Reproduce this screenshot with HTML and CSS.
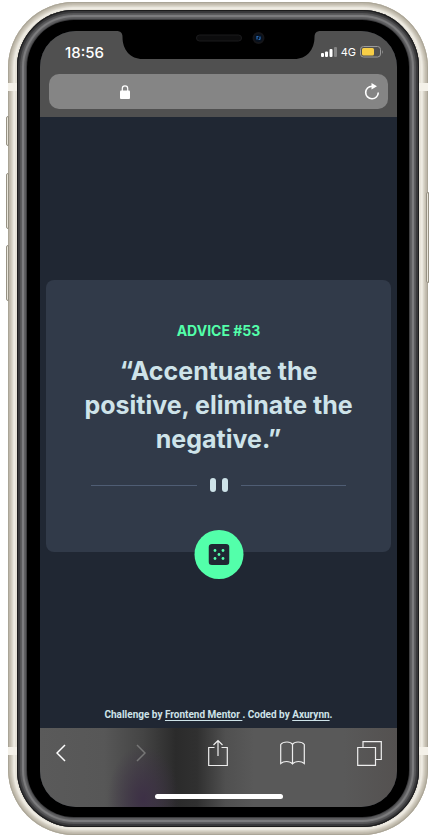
FILE: index.html
```html
<!DOCTYPE html>
<html lang="en">
<head>
<meta charset="utf-8">
<meta name="viewport" content="width=device-width, initial-scale=1">
<title>Advice generator</title>
<link rel="stylesheet" href="styles.css">
</head>
<body>
<div class="phone">
  <span class="side-key side-key-mute"></span>
  <span class="side-key side-key-up"></span>
  <span class="side-key side-key-down"></span>
  <span class="side-key side-key-power"></span>
  <span class="antenna antenna-top"></span>
  <span class="antenna antenna-bottom"></span>
  <div class="rim">
    <div class="glass">
      <div class="screen">
        <svg class="notch" viewBox="0 0 205 30" width="205" height="30" aria-hidden="true">
          <path d="M0 0H204V1C200 1 198 3 198 7C198 20 190 29 178 29H26C14 29 6 20 6 7C6 3 4 1 0 1Z" fill="#000"/>
          <rect x="80" y="5" width="45" height="6" rx="3" fill="#0c0c0d" stroke="#1b1b1d"/>
          <circle cx="142" cy="8" r="6" fill="#151518"/>
          <circle cx="142" cy="8" r="4" fill="#07111f"/>
          <path d="M140.500 6v3.500M143.500 6.500v3M141 6.500h1M142 9.500h1.500" stroke="#2b6cb5" stroke-width="1.200" fill="none"/>
        </svg>
        <header class="browser-top">
          <div class="status">
            <span class="clock">18:56</span>
            <span class="signals">
              <svg width="16" height="10" viewBox="0 0 16 10" aria-hidden="true">
                <g fill="#fff"><rect x="0" y="6" width="3" height="4" rx="1"/><rect x="4" y="4.500" width="3" height="5.500" rx="1"/><rect x="8.500" y="2" width="3" height="8" rx="1"/></g>
                <rect x="13" y="0" width="3" height="10" rx="1" fill="#858585"/>
              </svg>
              <span class="network">4G</span>
              <svg width="24" height="12" viewBox="0 0 24 12" aria-hidden="true">
                <rect x=".5" y=".5" width="20" height="10.500" rx="3" fill="none" stroke="#9b9b9b"/>
                <rect x="2" y="2" width="12" height="7.500" rx="1.500" fill="#f7ce46"/>
                <path d="M22 4v4q1.500-2 0-4" fill="#a5a5a5"/>
              </svg>
            </span>
          </div>
          <div class="address">
            <svg width="10" height="14" viewBox="0 0 10 14" aria-hidden="true">
              <rect x="0" y="5.500" width="10" height="8.500" rx="1" fill="#fff"/>
              <path d="M2.300 6V3.500a2.700 2.700 0 0 1 5.400 0V6" fill="none" stroke="#fff" stroke-width="1.200"/>
            </svg>
            <input class="address-input" type="text" aria-label="Address">
            <button class="icon-button" aria-label="Reload">
              <svg width="16" height="18" viewBox="0 0 16 18" aria-hidden="true">
                <path d="M8.500 3.200H8A6.300 6.300 0 1 0 14.300 9.600" fill="none" stroke="#fff" stroke-width="1.600"/>
                <path d="M7.500 0L13 3.300L7.500 6.500Z" fill="#fff"/>
              </svg>
            </button>
          </div>
        </header>
        <main class="page">
          <article class="card">
            <h1 class="advice-number">ADVICE #53</h1>
            <p class="quote">“Accentuate the positive, eliminate the negative.”</p>
            <div class="divider"><span class="bar"></span><span class="bar"></span></div>
            <button class="dice" aria-label="New advice">
              <svg width="21" height="21" viewBox="0 0 21 21" aria-hidden="true">
                <rect width="21" height="21" rx="3.500" fill="#202733"/>
                <g fill="#53ffaa"><circle cx="6.500" cy="6.500" r="1.400"/><circle cx="14.500" cy="6.500" r="1.400"/><circle cx="10.500" cy="10.500" r="1.400"/><circle cx="6.500" cy="14.500" r="1.400"/><circle cx="14.500" cy="14.500" r="1.400"/></g>
              </svg>
            </button>
          </article>
          <footer class="attribution">Challenge by <a href="#">Frontend Mentor </a>. Coded by <a href="#">Axurynn</a>.</footer>
        </main>
        <nav class="toolbar" aria-label="Browser">
          <div class="tools">
            <button class="icon-button history-button" aria-label="Back"><svg width="10" height="18" viewBox="0 0 10 18"><path d="M9 1L1 9L9 17" fill="none" stroke="#fff" stroke-width="1.500"/></svg></button>
            <button class="icon-button history-button" aria-label="Forward"><svg width="10" height="18" viewBox="0 0 10 18"><path d="M1 1L9 9L1 17" fill="none" stroke="#777" stroke-width="1.500"/></svg></button>
            <button class="icon-button" aria-label="Share"><svg width="20" height="28" viewBox="0 0 20 28"><path d="M6.500 8.500H.7V26.500H19.300V8.500H13.500M10 17V1.500M5.500 6L10 1.500L14.500 6" fill="none" stroke="#eee" stroke-width="1.200"/></svg></button>
            <button class="icon-button" aria-label="Bookmarks"><svg width="25" height="24" viewBox="0 0 25 24"><path d="M12.500 3.500Q11 1 7 1Q2.500 1 .7 3.500V22.500Q3 20.500 6.500 20.500Q10.500 20.500 12.500 23Q14.500 20.500 18.500 20.500Q22 20.500 24.300 22.500V3.500Q22.500 1 18 1Q14 1 12.500 3.500V23" fill="none" stroke="#eee" stroke-width="1.200"/></svg></button>
            <button class="icon-button" aria-label="Tabs"><svg width="25" height="25" viewBox="0 0 25 25"><path d="M.7 6.500H18.500V24.300H.7ZM6 6.500V.7H24.300V18.500H18.500" fill="none" stroke="#eee" stroke-width="1.200"/></svg></button>
          </div>
          <span class="home-bar"></span>
        </nav>
      </div>
    </div>
  </div>
</div>
</body>
</html>
```

FILE: styles.css
```css
* {
  box-sizing: border-box;
}

body {
  margin: 0;
  min-height: 100vh;
  padding: 2px 4px 2px 8px;
  display: flex;
  background: #fff;
  font-family: Inter, "Liberation Sans", sans-serif;
}

button {
  border: 0;
  padding: 0;
  cursor: pointer;
}

svg {
  display: block;
}

/* Device shell */
.phone {
  position: relative;
  flex: 1;
  display: flex;
  padding: 8px 9px;
  border-radius: 66px;
  background: #e6e2d8;
  box-shadow: inset 0 0 1px 1px #a8a395, inset 0 0 2px 3px #bfb9ab, inset 0 0 2px 5px #d6d1c5, inset 0 0 1px 7px #f1eee6;
}

.rim {
  position: relative;
  flex: 1;
  display: flex;
  padding: 10px;
  border-radius: 57px;
  background: #3a3a3c;
  box-shadow: inset 0 0 0 1px #1c1c1d, inset 0 0 1px 3px #38383a, inset 0 0 1px 5px #58585a, inset 0 0 1px 7px #808082, inset 0 0 1px 9px #5e5e60;
}

.glass {
  flex: 1;
  display: flex;
  padding: 11px 12px 10px 13px;
  border-radius: 47px;
  background: #000;
}

.screen {
  position: relative;
  flex: 1;
  display: flex;
  flex-direction: column;
  overflow: hidden;
  border-radius: 36px;
  background: #202733;
}

.side-key {
  position: absolute;
  left: -2px;
  width: 3px;
  border: 1px solid #969183;
  border-radius: 2px 0 0 2px;
  background: #e8e4da;
}

.side-key-mute {
  top: 114px;
  height: 30px;
}

.side-key-up {
  top: 171px;
  height: 56px;
}

.side-key-down {
  top: 243px;
  height: 56px;
}

.side-key-power {
  top: 190px;
  right: -1px;
  left: auto;
  height: 91px;
}

.antenna {
  position: absolute;
  left: 0;
  right: 0;
  height: 8px;
  background: #f4f1e9;
}

.antenna-top {
  top: 81px;
}

.antenna-bottom {
  bottom: 80px;
}

.notch {
  position: absolute;
  top: -1px;
  left: 50%;
  transform: translateX(-50%);
}

/* Browser top */
.browser-top {
  padding: 11px 9px 8px;
  background: #505050;
}

.status {
  height: 20px;
  margin-bottom: 12px;
  padding: 0 4px 0 16px;
  display: flex;
  justify-content: space-between;
  align-items: center;
  color: #fff;
}

.clock {
  font-size: 15px;
  font-weight: 500;
}

.signals {
  display: flex;
  align-items: center;
  gap: 4px;
}

.network {
  font-size: 11px;
}

.address {
  height: 35px;
  padding: 0 8px 0 71px;
  display: flex;
  align-items: center;
  border-radius: 10px;
  background: #858585;
}

.address-input {
  flex: 1;
  min-width: 0;
  border: 0;
  outline: 0;
  background: transparent;
  color: #fff;
}

.icon-button {
  background: transparent;
}

/* Advice page */
.page {
  flex: 1;
  display: flex;
  flex-direction: column;
  padding: 7px 6px;
}

.card {
  position: relative;
  margin: auto 0;
  padding: 40px 37px 60px;
  border-radius: 8px;
  background: #313a49;
  text-align: center;
}

.advice-number {
  margin: 0 0 12px;
  color: #53ffaa;
  font-size: 14px;
  font-weight: 700;
  line-height: 22px;
}

.quote {
  margin: 0 0 22px;
  color: #cee3e9;
  font-size: 25px;
  font-weight: 700;
  line-height: 34px;
}

.divider {
  display: flex;
  align-items: center;
  justify-content: center;
  gap: 6px;
  margin: 0 8px;
}

.divider::before,
.divider::after {
  content: "";
  flex: 1;
  height: 1px;
  background: #4f5d74;
}

.divider::before {
  margin-right: 7px;
}

.divider::after {
  margin-left: 7px;
}

.bar {
  width: 6px;
  height: 14px;
  border-radius: 3px;
  background: #cee3e9;
}

.dice {
  position: absolute;
  left: 50%;
  bottom: -27px;
  width: 49px;
  height: 49px;
  display: grid;
  place-items: center;
  transform: translateX(-50%);
  border-radius: 50%;
  background: #53ffaa;
}

.attribution {
  color: #cee3e9;
  font-family: Roboto, "Liberation Sans", sans-serif;
  font-size: 10px;
  font-weight: 700;
  line-height: 13px;
  text-align: center;
}

.attribution a {
  color: inherit;
  text-underline-offset: 2px;
}

/* Browser toolbar */
.toolbar {
  height: 79px;
  padding: 11px 15px 8px 7px;
  display: flex;
  flex-direction: column;
  justify-content: space-between;
  background:
    radial-gradient(ellipse 36px 54px at 29% 90%, #3d3046, transparent),
    linear-gradient(90deg, #5a5a5a 0%, #575757 18%, #444 29%, #2b2b2b 38%, #303030 44%, #505050 52%, #595959 60%, #595959 85%, #545150 100%);
}

.tools {
  height: 28px;
  display: flex;
  justify-content: space-between;
  align-items: center;
}

.history-button {
  width: 28px;
  display: grid;
  justify-content: center;
}

.home-bar {
  width: 128px;
  height: 5px;
  margin-left: 108px;
  border-radius: 3px;
  background: #fff;
}
```
